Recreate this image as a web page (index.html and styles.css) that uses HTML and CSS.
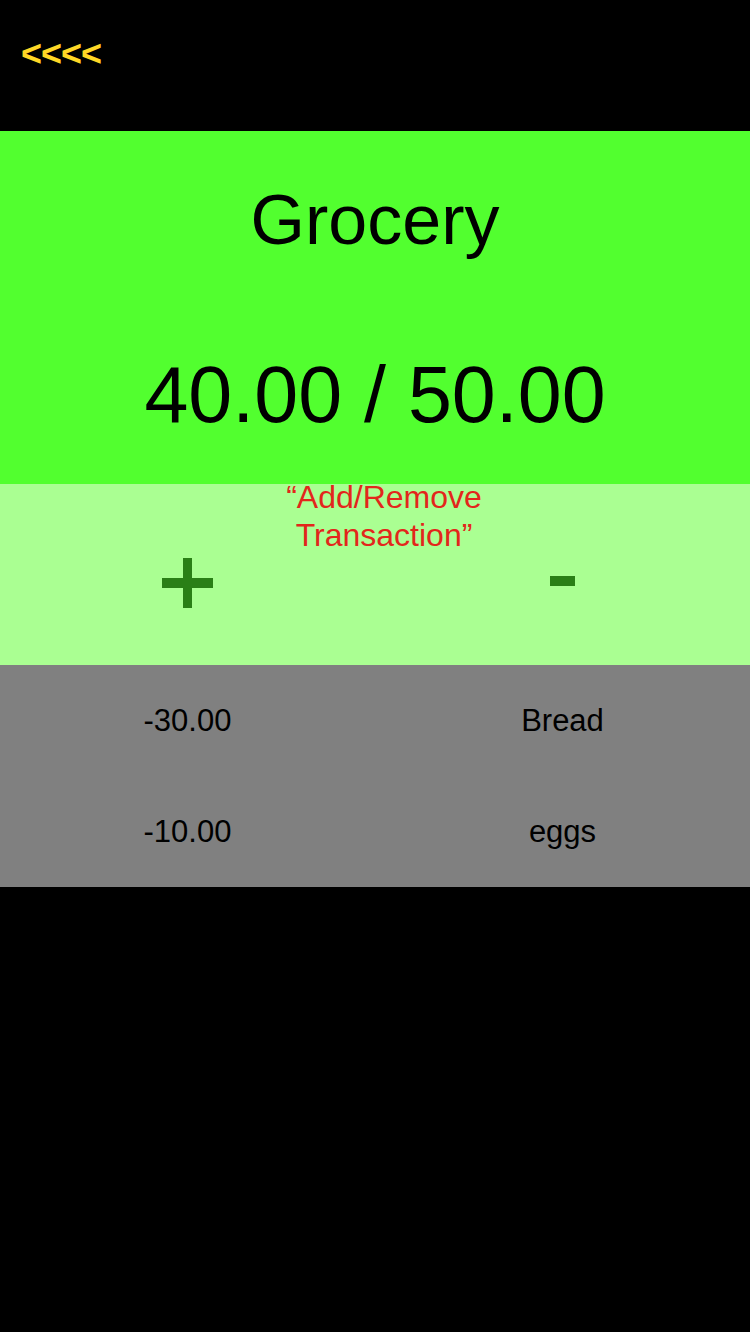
FILE: index.html
```html
<!DOCTYPE html>
<html>
<head>
<meta charset="utf-8">
<link rel="stylesheet" href="styles.css">
</head>
<body>
<div class="screen">
  <div class="topbar"><span class="back">&lt;&lt;&lt;&lt;</span></div>
  <div class="header">
    <div class="title">Grocery</div>
    <div class="amount">40.00 / 50.00</div>
  </div>
  <div class="actions">
    <div class="label">“Add/Remove<br>Transaction”</div>
    <div class="buttons">
      <div class="btn">
        <svg class="plus" width="51" height="50" viewBox="0 0 51 50"><rect x="0" y="20" width="51" height="10" fill="#2a7f16"/><rect x="21" y="0" width="9" height="50" fill="#2a7f16"/></svg>
      </div>
      <div class="btn">
        <svg class="minus" width="25" height="10" viewBox="0 0 25 10"><rect x="0" y="0" width="25" height="10" fill="#2a7f16"/></svg>
      </div>
    </div>
  </div>
  <div class="list">
    <div class="row"><div class="cell">-30.00</div><div class="cell">Bread</div></div>
    <div class="row"><div class="cell">-10.00</div><div class="cell">eggs</div></div>
  </div>
</div>
</body>
</html>
```
FILE: styles.css
```css
html, body {
  margin: 0;
  padding: 0;
  background: #000;
}
.screen {
  width: 750px;
  height: 1332px;
  background: #000;
  font-family: "Liberation Sans", Arial, sans-serif;
  display: flex;
  flex-direction: column;
}
.topbar {
  height: 131px;
  box-sizing: border-box;
  padding: 34px 0 0 21px;
}
.back {
  color: #ffd726;
  font-weight: bold;
  font-size: 36px;
  line-height: 40px;
  letter-spacing: -1px;
}
.header {
  height: 353px;
  box-sizing: border-box;
  background: #52ff2f;
  display: flex;
  flex-direction: column;
  align-items: center;
  padding-top: 54px;
  gap: 100px;
}
.title {
  font-size: 70px;
  line-height: 70px;
  color: #000;
}
.amount {
  font-size: 79px;
  line-height: 80px;
  color: #000;
}
.actions {
  height: 181px;
  box-sizing: border-box;
  background: #aaff92;
  display: flex;
  flex-direction: column;
}
.label {
  margin-top: -6px;
  padding-left: 18px;
  text-align: center;
  color: #e3261b;
  font-size: 32px;
  line-height: 38px;
}
.buttons {
  display: grid;
  grid-template-columns: 1fr 1fr;
  height: 50px;
  margin-top: 4px;
}
.btn {
  display: flex;
  align-items: center;
  justify-content: center;
}
.minus {
  margin-bottom: 4px;
}
.list {
  background: #808080;
}
.row {
  display: grid;
  grid-template-columns: 1fr 1fr;
  height: 111px;
  align-items: center;
}
.cell {
  text-align: center;
  font-size: 31px;
  color: #000;
}
```
